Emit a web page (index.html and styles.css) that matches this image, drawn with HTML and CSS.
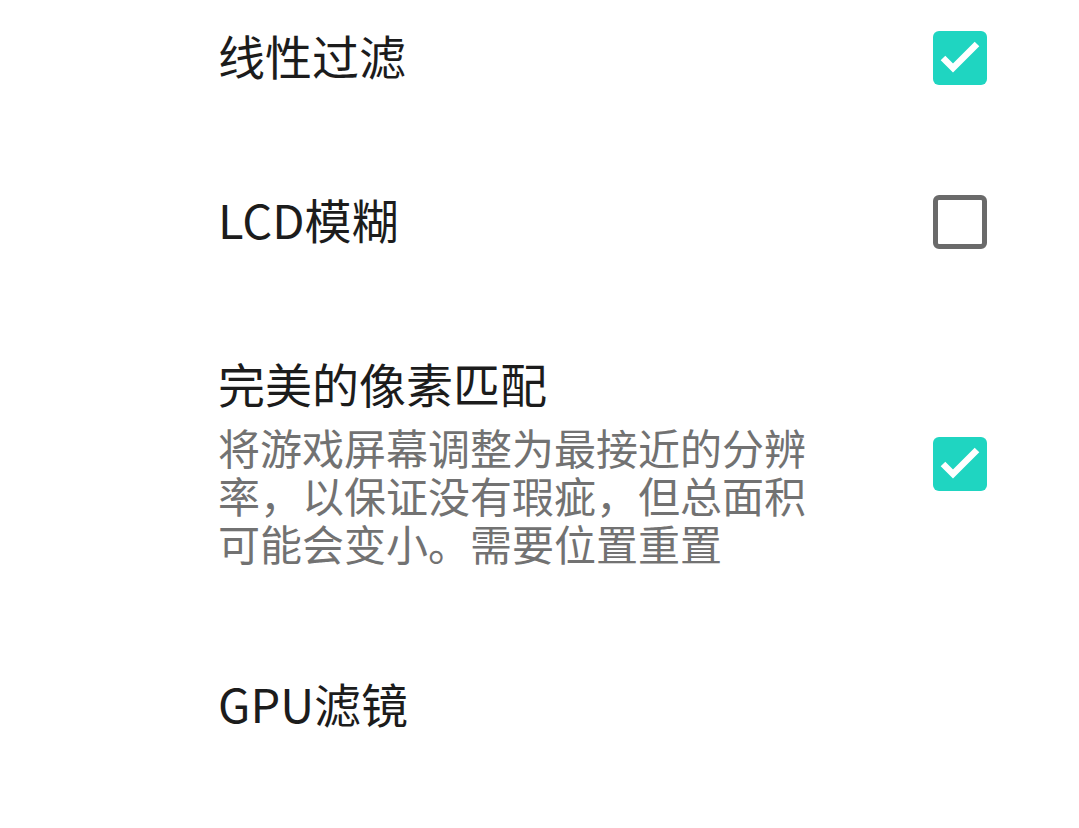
FILE: index.html
```html
<!DOCTYPE html>
<html>
  <head>
    <meta name="viewport" content="width=device-width, initial-scale=1.0" />
    <title>显示设置</title>
    <link rel="stylesheet" href="styles.css">
  </head>
  <body>
    <div class="list">
      <div class="row">
        <div class="text">
          <div class="title">线性过滤</div>
        </div>
        <div class="check on">
          <svg viewBox="0 0 54 54"><path d="M10 27 L20 37 L44 13" /></svg>
        </div>
      </div>

      <div class="row">
        <div class="text">
          <div class="title">LCD模糊</div>
        </div>
        <div class="check"></div>
      </div>

      <div class="row">
        <div class="text">
          <div class="title">完美的像素匹配</div>
          <div class="desc">将游戏屏幕调整为最接近的分辨率，以保证没有瑕疵，但总面积可能会变小。需要位置重置</div>
        </div>
        <div class="check on">
          <svg viewBox="0 0 54 54"><path d="M10 27 L20 37 L44 13" /></svg>
        </div>
      </div>

      <div class="row">
        <div class="text">
          <div class="title">GPU滤镜</div>
        </div>
      </div>
    </div>
  </body>
</html>
```

FILE: styles.css
```css
html {
  background: #fff;
}
body {
  margin: 0;
  font-family: "Noto Sans CJK SC", "Noto Sans", sans-serif;
  overflow: hidden;
}
.list {
  margin-top: -24px;
}
.row {
  display: flex;
  align-items: center;
  padding: 51px 92px 51px 218px;
}
.text {
  flex: 1;
  padding-right: 110px;
  padding-bottom: 6px;
}
.title {
  font-size: 47px;
  line-height: 56px;
  color: #1c1c1c;
}
.desc {
  margin-top: 12px;
  font-size: 42px;
  line-height: 48px;
  color: #727272;
}
.check {
  width: 54px;
  height: 54px;
  box-sizing: border-box;
  border: 5px solid #6a6a6a;
  border-radius: 6px;
}
.check.on {
  border: none;
  background: #1fd5c1;
}
.check svg {
  display: block;
  width: 54px;
  height: 54px;
}
.check path {
  fill: none;
  stroke: #fff;
  stroke-width: 6.5;
}
```
